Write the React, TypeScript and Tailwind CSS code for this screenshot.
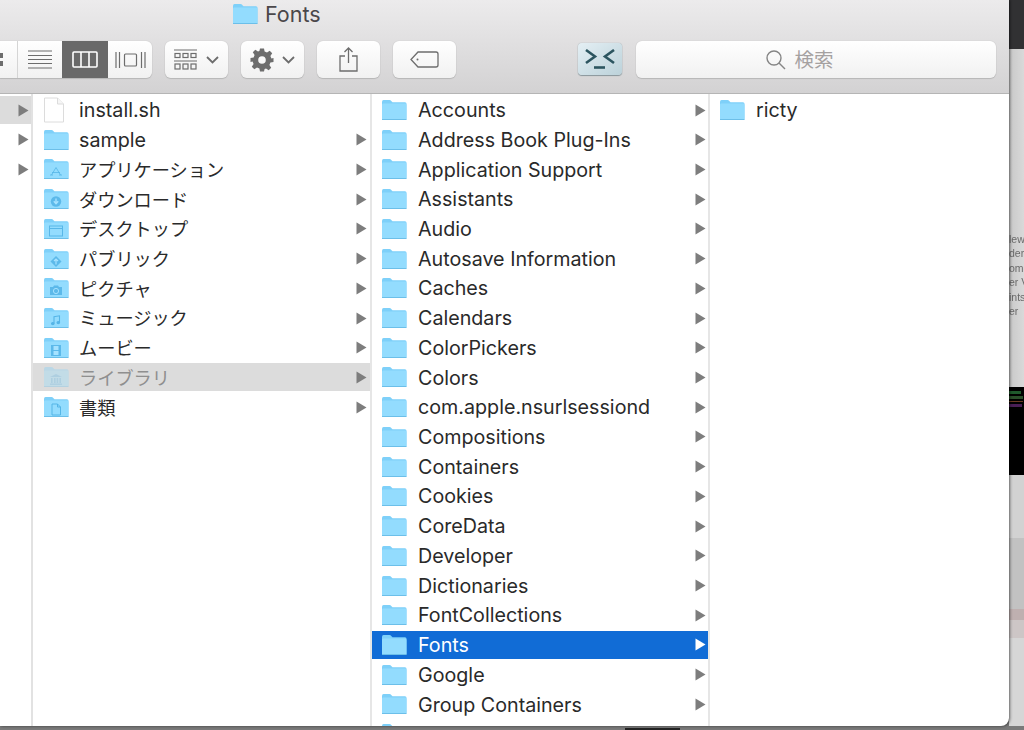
import React from "react";

const SANS = "font-['Inter','Noto_Sans_CJK_JP',sans-serif]";

type Glyph =
  | "app"
  | "down"
  | "desk"
  | "pub"
  | "pic"
  | "music"
  | "movie"
  | "lib"
  | "doc"
  | undefined;

function GlyphMark({ g }: { g: Glyph }) {
  const c = "#52b3e6";
  if (g === "app")
    return <path d="M13 9.5 L8.5 17 M13 9.5 L17.5 17 M9 14.5 H17 M7 17 H10 M16 17 H19" stroke={c} strokeWidth="1" fill="none" opacity="0.75" />;
  if (g === "down")
    return (
      <g>
        <circle cx="13" cy="13.5" r="5.2" fill={c} opacity="0.85" />
        <path d="M13 10.5 V15 M10.8 13.2 L13 15.6 L15.2 13.2" stroke="#a6e2ff" strokeWidth="1.4" fill="none" />
      </g>
    );
  if (g === "desk")
    return (
      <g fill="none" stroke={c} strokeWidth="1" opacity="0.9">
        <rect x="6.5" y="8" width="13" height="10" />
        <path d="M6.5 10.5 H19.5" />
      </g>
    );
  if (g === "pub")
    return (
      <g>
        <path d="M13 8 L18.5 13.5 L13 19 L7.5 13.5 Z" fill={c} opacity="0.85" />
        <path d="M13 16.5 V11.5 M11 13 L13 11 L15 13" stroke="#a6e2ff" strokeWidth="1.2" fill="none" />
      </g>
    );
  if (g === "pic")
    return (
      <g>
        <path d="M7 10 H10 L11 8.5 H15 L16 10 H19 V18 H7 Z" fill={c} opacity="0.85" />
        <circle cx="13" cy="14" r="2.6" fill="none" stroke="#a6e2ff" strokeWidth="1" />
      </g>
    );
  if (g === "music")
    return (
      <g fill="none" stroke={c} strokeWidth="1.1" opacity="0.95">
        <path d="M11 16.5 V9.8 L16.5 8.8 V15.5" />
        <ellipse cx="9.8" cy="16.6" rx="1.3" ry="1" fill={c} />
        <ellipse cx="15.3" cy="15.6" rx="1.3" ry="1" fill={c} />
      </g>
    );
  if (g === "movie")
    return (
      <g>
        <rect x="8" y="8" width="10" height="11" fill={c} opacity="0.85" />
        <rect x="10.5" y="9" width="5" height="4" fill="#a6e2ff" />
        <rect x="10.5" y="14" width="5" height="4" fill="#a6e2ff" />
      </g>
    );
  if (g === "lib")
    return (
      <g fill={c} opacity="0.85">
        <path d="M13 8 L19 11 H7 Z" />
        <rect x="8" y="12" width="1.6" height="5" />
        <rect x="11" y="12" width="1.6" height="5" />
        <rect x="13.6" y="12" width="1.6" height="5" />
        <rect x="16.4" y="12" width="1.6" height="5" />
        <rect x="7" y="17.5" width="12" height="1.4" />
      </g>
    );
  if (g === "doc")
    return <path d="M9 8 H14.5 L17.5 11 V19 H9 Z M14.5 8 V11 H17.5" fill="none" stroke={c} strokeWidth="1" opacity="0.95" />;
  return null;
}

function Folder({ g, faded, className }: { g?: Glyph; faded?: boolean; className?: string }) {
  return (
    <svg width="26" height="22" viewBox="0 0 26 22" className={`shrink-0 ${faded ? "opacity-35" : ""} ${className ?? ""}`}>
      <path d="M1 3 Q1 1 2.5 1 H8.5 Q9.5 1 10.5 2.2 L11.5 3.2 H24 Q25.5 3.2 25.5 4.7 V19.5 Q25.5 21 24 21 H2.5 Q1 21 1 19.5 Z" fill="#7ed0f9" />
      <rect x="1" y="4.6" width="24.5" height="16.4" rx="1.4" fill="#93dcfe" />
      <rect x="1" y="20" width="24.5" height="1" fill="#6cbfe9" />
      <GlyphMark g={g} />
    </svg>
  );
}

function Arrow({ white }: { white?: boolean }) {
  return (
    <svg width="11" height="13" viewBox="0 0 11 13" className="shrink-0">
      <path d="M0.5 0.5 L10.5 6.5 L0.5 12.5 Z" fill={white ? "#ffffff" : "#7d7d7d"} />
    </svg>
  );
}

function FileIcon() {
  return (
    <svg width="22" height="26" viewBox="0 0 22 26" className="shrink-0">
      <path d="M1.5 1 H14.5 L20.5 7 V25 H1.5 Z" fill="#fff" stroke="#dcdcdc" />
      <path d="M14.5 1 V7 H20.5" fill="#f6f6f6" stroke="#dcdcdc" />
    </svg>
  );
}

const middle: { n: string; g?: Glyph; file?: boolean; arrow?: boolean; state?: "dim"; jp?: boolean }[] = [
  { n: "install.sh", file: true },
  { n: "sample", arrow: true },
  { n: "アプリケーション", g: "app", arrow: true, jp: true },
  { n: "ダウンロード", g: "down", arrow: true, jp: true },
  { n: "デスクトップ", g: "desk", arrow: true, jp: true },
  { n: "パブリック", g: "pub", arrow: true, jp: true },
  { n: "ピクチャ", g: "pic", arrow: true, jp: true },
  { n: "ミュージック", g: "music", arrow: true, jp: true },
  { n: "ムービー", g: "movie", arrow: true, jp: true },
  { n: "ライブラリ", g: "lib", arrow: true, state: "dim", jp: true },
  { n: "書類", g: "doc", arrow: true, jp: true },
];

const libs = [
  "Accounts",
  "Address Book Plug-Ins",
  "Application Support",
  "Assistants",
  "Audio",
  "Autosave Information",
  "Caches",
  "Calendars",
  "ColorPickers",
  "Colors",
  "com.apple.nsurlsessiond",
  "Compositions",
  "Containers",
  "Cookies",
  "CoreData",
  "Developer",
  "Dictionaries",
  "FontCollections",
  "Fonts",
  "Google",
  "Group Containers",
  "",
];

function Btn({ children, className = "" }: { children: React.ReactNode; className?: string }) {
  return (
    <div className={`h-[37px] w-[63px] rounded-[6px] bg-gradient-to-b from-[#ffffff] to-[#f1f1f1] shadow-[0_0_1px_#a9a9a9,0_1px_1px_#b9b9b9] flex items-center justify-center ${className}`}>
      {children}
    </div>
  );
}

function Toolbar() {
  return (
    <div className="h-[94px] shrink-0 bg-gradient-to-b from-[#ecebec] to-[#d3d2d3] border-b border-[#b5b5b5] flex flex-col">
      <div className="h-[28px] flex items-center pl-[232px] gap-[7px] shrink-0">
        <Folder />
        <span className={`${SANS} text-[21.5px] leading-none pt-[2px] text-[#4a474a]`}>Fonts</span>
      </div>
      <div className="mt-[13px] flex items-start">
        <div className="flex h-[37px] rounded-r-[6px] overflow-hidden bg-gradient-to-b from-[#ffffff] to-[#f1f1f1] shadow-[0_0_1px_#a9a9a9,0_1px_1px_#b9b9b9]">
          <div className="w-[18px] border-r border-[#d5d5d5] flex flex-col justify-center gap-[3px]">
            <div className="w-[3px] h-[5px] bg-[#6d6d6d]" />
            <div className="w-[3px] h-[5px] bg-[#6d6d6d]" />
          </div>
          <div className="w-[44px] flex items-center justify-center">
            <svg width="24" height="19" viewBox="0 0 24 19" stroke="#6d6d6d" strokeWidth="1.2">
              <path d="M0 1 H24 M0 5.5 H24 M0 9.5 H24 M0 13.5 H24 M0 18 H24" />
            </svg>
          </div>
          <div className="w-[46px] bg-[#696969] flex items-center justify-center">
            <svg width="26" height="17" viewBox="0 0 26 17" fill="none" stroke="#fff" strokeWidth="1.6">
              <rect x="1" y="1" width="24" height="15" rx="1" />
              <path d="M9 1 V16 M17 1 V16" />
            </svg>
          </div>
          <div className="w-[44px] flex items-center justify-center">
            <svg width="31" height="18" viewBox="0 0 31 18" fill="none" stroke="#6d6d6d" strokeWidth="1.2">
              <rect x="9.5" y="3" width="12" height="12" rx="1" />
              <path d="M1 1 V17 M4.5 1 V17 M26.5 1 V17 M30 1 V17" />
            </svg>
          </div>
        </div>
        <Btn className="ml-[13px] gap-[8px]">
          <svg width="24" height="22" viewBox="0 0 24 22" fill="none" stroke="#6d6d6d" strokeWidth="1.2">
            <path d="M0 1 H23 M0 12 H23" />
            <rect x="1" y="4.5" width="5" height="4" />
            <rect x="9" y="4.5" width="5" height="4" />
            <rect x="17" y="4.5" width="5" height="4" />
            <rect x="1" y="15" width="5" height="5" />
            <rect x="9" y="15" width="5" height="5" />
            <rect x="17" y="15" width="5" height="5" />
          </svg>
          <svg width="13" height="8" viewBox="0 0 13 8" fill="none" stroke="#6d6d6d" strokeWidth="1.8">
            <path d="M1 1 L6.5 6.5 L12 1" />
          </svg>
        </Btn>
        <Btn className="ml-[13px] gap-[8px]">
          <svg width="24" height="24" viewBox="0 0 24 24" fill="#6d6d6d">
            <path
              fillRule="evenodd"
              d="M10 0.5 H14 L14.6 3.6 L17 4.6 L19.7 2.8 L22.2 5.3 L20.4 8 L21.4 10.4 L23.5 10 V14 L20.4 14.6 L19.4 17 L21.2 19.7 L18.7 22.2 L16 20.4 L14.6 21 L14 23.5 H10 L9.4 20.4 L7 19.4 L4.3 21.2 L1.8 18.7 L3.6 16 L2.6 13.6 L0.5 14 V10 L3.6 9.4 L4.6 7 L2.8 4.3 L5.3 1.8 L8 3.6 L9.4 3 Z M12 8.2 A3.8 3.8 0 1 0 12 15.8 A3.8 3.8 0 1 0 12 8.2 Z"
            />
          </svg>
          <svg width="13" height="8" viewBox="0 0 13 8" fill="none" stroke="#6d6d6d" strokeWidth="1.8">
            <path d="M1 1 L6.5 6.5 L12 1" />
          </svg>
        </Btn>
        <Btn className="ml-[13px]">
          <svg width="19" height="25" viewBox="0 0 19 25" fill="none" stroke="#6d6d6d" strokeWidth="1.3">
            <path d="M6 9 H1 V24 H18 V9 H13 M9.5 16 V1 M5.5 5 L9.5 1 L13.5 5" />
          </svg>
        </Btn>
        <Btn className="ml-[13px]">
          <svg width="29" height="17" viewBox="0 0 29 17" fill="none" stroke="#6d6d6d" strokeWidth="1.3">
            <path d="M8 1 H26 Q28 1 28 3 V14 Q28 16 26 16 H8 L1 8.5 Z" />
            <circle cx="7.5" cy="8.5" r="1" fill="#6d6d6d" stroke="none" />
          </svg>
        </Btn>
        <div className="ml-[122px] mt-[2px] w-[44px] h-[32px] rounded-[4px] bg-gradient-to-br from-[#e4eff4] to-[#bcd2da] shadow-[0_0_1px_#7f8f96,0_1px_1px_#8b979c] flex items-center justify-center">
          <svg width="30" height="20" viewBox="0 0 30 20" fill="none" stroke="#2c5560" strokeWidth="2.6">
            <path d="M1 1 L10 7.5 L1 14 M29 1 L20 7.5 L29 14" />
            <path d="M9 18.5 H20" />
          </svg>
        </div>
        <div className="ml-[14px] w-[360px] h-[37px] pr-[32px] rounded-[6px] bg-gradient-to-b from-[#ffffff] to-[#f1f1f1] shadow-[0_0_1px_#a9a9a9,0_1px_1px_#b9b9b9] flex items-center justify-center gap-[8px]">
          <svg width="20" height="20" viewBox="0 0 20 20" fill="none" stroke="#858585" strokeWidth="1.4">
            <circle cx="8" cy="8" r="7" />
            <path d="M13 13 L19 19" />
          </svg>
          <span className={`${SANS} text-[19.5px] leading-none pt-[2px] text-[#a5a1a1]`}>検索</span>
        </div>
      </div>
    </div>
  );
}

function Row({
  active,
  dim,
  children,
  arrow,
  padLeft,
  padRight,
}: {
  active?: boolean;
  dim?: boolean;
  children: React.ReactNode;
  arrow?: boolean;
  padLeft: string;
  padRight: string;
}) {
  const bg = active ? "bg-[#116cd6] text-white" : dim ? "bg-[#dcdcdc] text-[#8f8f8f]" : "text-[#2a2a2a]";
  return (
    <div className={`h-[28px] shrink-0 flex items-center ${padLeft} ${padRight} ${bg}`}>
      {children}
      <span className="flex-1" />
      {arrow && <Arrow white={active} />}
    </div>
  );
}

const TEXT = `${SANS} leading-none whitespace-nowrap`;

export default function App() {
  return (
    <div className="w-[1024px] h-[730px] overflow-hidden flex flex-col bg-[#7a7a7a]">
      <div className="flex h-[726px] shrink-0">
        <div className="w-[1009px] h-[726px] shrink-0 flex flex-col overflow-hidden rounded-br-[8px] bg-white shadow-[1px_0_3px_rgba(0,0,0,0.55)] z-10">
          <Toolbar />
          <div className="flex-1 min-h-0 flex overflow-hidden">
            <div className="w-[33px] shrink-0 border-r-2 border-[#e2e2e2] pt-[2px] flex flex-col gap-[1.72px]">
              {[0, 1, 2].map((i) => (
                <div key={i} className={`h-[28px] flex items-center pl-[18px] ${i === 0 ? "bg-[#dcdcdc]" : ""}`}>
                  <Arrow />
                </div>
              ))}
            </div>
            <div className="w-[339px] shrink-0 border-r-2 border-[#e6e6e6] pt-[2px] flex flex-col gap-[1.72px] overflow-hidden">
              {middle.map((m) => (
                <Row key={m.n} arrow={m.arrow} dim={m.state === "dim"} padLeft="pl-[10px]" padRight="pr-[3px]">
                  {m.file ? <FileIcon /> : <Folder g={m.g} faded={m.state === "dim"} />}
                  <span className={`${TEXT} ${m.jp ? "text-[18.2px] pt-[1px]" : "text-[19.7px] pt-[2px]"} ${m.file ? "ml-[14px]" : "ml-[10px]"}`}>{m.n}</span>
                </Row>
              ))}
            </div>
            <div className="w-[338px] shrink-0 border-r-2 border-[#e6e6e6] pt-[2px] flex flex-col gap-[1.72px] overflow-hidden">
              {libs.map((n, i) => (
                <Row key={i} arrow={n !== ""} active={n === "Fonts"} padLeft="pl-[9px]" padRight="pr-[2px]">
                  <Folder />
                  <span className={`${TEXT} text-[19.7px] pt-[2px] ml-[11px]`}>{n}</span>
                </Row>
              ))}
            </div>
            <div className="flex-1 pt-[2px] flex flex-col">
              <Row padLeft="pl-[9px]" padRight="pr-[2px]">
                <Folder />
                <span className={`${TEXT} text-[19.7px] pt-[2px] ml-[11px]`}>ricty</span>
              </Row>
            </div>
          </div>
        </div>
        <div className="w-[15px] shrink-0 flex flex-col overflow-hidden bg-[#d4d4d4]">
          <div className="h-[49px] shrink-0 bg-[#313133]" />
          <div className="h-[338px] shrink-0 bg-gradient-to-r from-[#c8c8c8] to-[#d9d9d9] pt-[183px] font-['Liberation_Sans',sans-serif] text-[10.5px] leading-[14.4px] text-[#6a6a6a] whitespace-nowrap blur-[0.4px]">
            <div>lew</div>
            <div>der V</div>
            <div>omé</div>
            <div>er V</div>
            <div>ints</div>
            <div>er</div>
          </div>
          <div className="h-[88px] shrink-0 bg-black pt-[4px] flex flex-col gap-[2px] blur-[0.5px]">
            <div className="h-[3px] w-[12px] bg-[#1f5a2c]" />
            <div className="h-[3px] w-[14px] bg-[#2a4f2a]" />
            <div className="h-[1px] w-[14px] bg-[#6a3a20]" />
            <div className="h-[3px] w-[13px] bg-[#4a1f55]" />
          </div>
          <div className="h-[63px] shrink-0 bg-[#d2d2d2]" />
          <div className="h-[71px] shrink-0 bg-[#c2c2c2]" />
          <div className="h-[11px] shrink-0 bg-[#bfb0b0]" />
          <div className="h-[18px] shrink-0 bg-[#cdc6c6]" />
          <div className="flex-1 bg-[#d6d6d6]" />
        </div>
      </div>
      <div className="flex-1 bg-[#7a7a7a] flex">
        <div className="ml-[625px] mt-[2px] w-[55px] h-[3px] bg-[#222]" />
      </div>
    </div>
  );
}
